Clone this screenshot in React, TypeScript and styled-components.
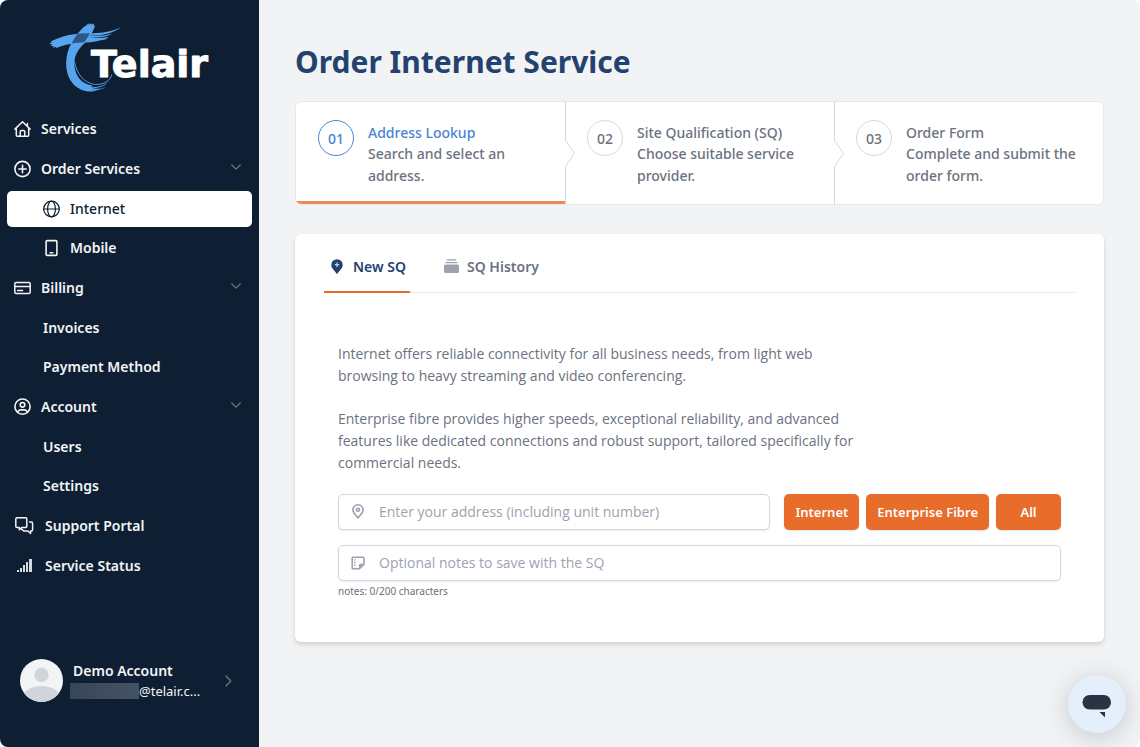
import React, { useState } from "react";
import styled, { createGlobalStyle, css } from "styled-components";

const navy = "#0f1f33";
const orange = "#e86c2a";
const line = "#e5e7eb";
const lineDark = "#d7d9e0";
const textFont = `"Open Sans", "Segoe UI", sans-serif`;

const GlobalStyle = createGlobalStyle`
  *, *::before, *::after { box-sizing: border-box; }
  body { margin: 0; background: #fff; }
  body, button { font-family: "Noto Sans", "Segoe UI", sans-serif; }
  h1, h2, p, ul, ol { margin: 0; padding: 0; }
  ul, ol { list-style: none; }
  a { color: inherit; text-decoration: none; }
`;

const Shell = styled.div`
  display: flex;
  min-height: 100vh;
  border-radius: 8px;
  overflow: hidden;
  background: #f2f3f5;
`;

const Sidebar = styled.aside`
  display: flex;
  flex-direction: column;
  flex: none;
  width: 259px;
  background: ${navy};
  color: #f3f4f6;
`;

const LogoLink = styled.a`
  display: block;
  height: 111px;
  padding: 20px 0 0 48px;
  svg { display: block; overflow: visible; }
`;

const NavList = styled.ul`
  display: flex;
  flex-direction: column;
  gap: 4px;
  padding: 0 7px;
`;

const SubList = styled.ul`
  display: flex;
  flex-direction: column;
  gap: 3px;
  margin-top: 4px;
`;

const rowStyle = css<{ $sub?: boolean; $active?: boolean }>`
  display: flex;
  align-items: center;
  gap: 10px;
  width: 100%;
  height: 36px;
  padding: 0 11px 0 ${(p) => (p.$sub ? 36 : 7)}px;
  border: 0;
  border-radius: 5px;
  background: ${(p) => (p.$active ? "#fff" : "transparent")};
  color: ${(p) => (p.$active ? navy : "#f3f4f6")};
  font-size: 14px;
  font-weight: ${(p) => (p.$active ? 500 : 600)};
  line-height: 20px;
  text-align: left;
  svg { flex: none; }
`;
const NavLink = styled.a<{ $sub?: boolean; $active?: boolean }>`${rowStyle}`;
const NavToggle = styled.button<{ $sub?: boolean; $active?: boolean }>`
  ${rowStyle}
  cursor: pointer;
  span { flex: 1; }
`;

const Profile = styled.a`
  display: flex;
  align-items: center;
  margin-top: auto;
  padding: 0 26px 45px 20px;
  svg { flex: none; }
`;
const ProfileText = styled.div`
  flex: 1;
  min-width: 0;
  padding-left: 7px;
  font-size: 14px;
  line-height: 21px;
`;
const ProfileName = styled.div`
  padding-left: 3px;
  font-weight: 600;
`;
const Email = styled.div`
  display: flex;
  align-items: center;
  font-size: 13px;
`;
const Masked = styled.span`
  width: 69px;
  height: 16px;
  background: linear-gradient(90deg, #384657, #455263);
`;

const Main = styled.main`
  flex: 1;
  min-width: 0;
  padding: 40px 36px;
`;
const Title = styled.h1`
  color: #23426f;
  font-size: 30px;
  font-weight: 700;
  line-height: 44px;
`;

const Steps = styled.ol`
  display: grid;
  grid-template-columns: repeat(3, 1fr);
  margin-top: 17px;
  border: 1px solid ${line};
  border-radius: 6px;
  background: #fff;
  overflow: hidden;
`;
const Step = styled.li<{ $current?: boolean }>`
  position: relative;
  display: flex;
  gap: 14px;
  min-height: 102px;
  padding: 18px 20px 16px 22px;
  color: ${(p) => (p.$current ? "#4a82d8" : "#6b7280")};
  box-shadow: ${(p) => (p.$current ? "inset 0 -3px #e98b5a" : "none")};
  & + & {
    padding-left: 21px;
    border-left: 1px solid ${lineDark};
  }
`;
const StepNumber = styled.span<{ $current?: boolean }>`
  display: flex;
  align-items: center;
  justify-content: center;
  flex: none;
  width: 36px;
  height: 36px;
  border: 1px solid ${(p) => (p.$current ? "#4a82d8" : lineDark)};
  border-radius: 50%;
  font-size: 14px;
  font-weight: 500;
`;
const StepText = styled.div`
  padding-top: 2px;
  font-size: 14px;
  font-weight: 500;
`;
const StepName = styled.h2`
  font-size: 14px;
  font-weight: 500;
  line-height: 21px;
`;
const StepInfo = styled.p`
  color: #6b7280;
  line-height: 22px;
`;
const StepArrow = styled.svg`
  position: absolute;
  left: -1px;
  top: 38px;
`;

const Panel = styled.section`
  margin-top: 29px;
  padding: 0 29px 43px;
  border-radius: 6px;
  background: #fff;
  box-shadow: 0 3px 5px rgba(0, 0, 0, 0.1), 0 1px 3px rgba(0, 0, 0, 0.06);
`;
const Tabs = styled.div`
  display: flex;
  gap: 28px;
  border-bottom: 1px solid ${line};
`;
const Tab = styled.button<{ $active?: boolean }>`
  display: flex;
  align-items: center;
  gap: 7px;
  height: 59px;
  margin-bottom: -1px;
  padding: 8px 4px 0;
  border: 0;
  border-bottom: 2px solid ${(p) => (p.$active ? orange : "transparent")};
  background: none;
  color: ${(p) => (p.$active ? "#23426f" : "#6b7280")};
  font-size: 14px;
  font-weight: 600;
  cursor: pointer;
`;

const Body = styled.div`
  padding: 50px 14px 0;
`;
const Intro = styled.div`
  max-width: 530px;
  color: #6b7280;
  font-family: ${textFont};
  font-size: 14px;
  line-height: 22px;
  p + p { margin-top: 21px; }
`;
const Form = styled.form`
  display: flex;
  flex-direction: column;
  gap: 15px;
  margin-top: 20px;
`;
const SearchRow = styled.div`
  display: flex;
  gap: 14px;
`;
const Buttons = styled.div`
  display: flex;
  gap: 7px;
`;
const Field = styled.label`
  display: flex;
  align-items: center;
  flex: 1 1 36px;
  gap: 11px;
  min-width: 0;
  height: 36px;
  padding: 0 10px;
  border: 1px solid #d3d6de;
  border-radius: 5px;
  background: #fff;
  box-shadow: 0 1px 2px rgba(0, 0, 0, 0.08);
  svg { flex: none; }
`;
const Input = styled.input`
  flex: 1;
  min-width: 0;
  border: 0;
  outline: 0;
  padding: 0;
  background: none;
  color: #374151;
  font-family: ${textFont};
  font-size: 14px;
  line-height: 20px;
  &::placeholder { color: #9ca3af; opacity: 1; }
`;
const Action = styled.button`
  min-width: 65px;
  height: 36px;
  padding: 0 11px;
  border: 0;
  border-radius: 5px;
  background: ${orange};
  box-shadow: 0 1px 2px rgba(0, 0, 0, 0.1);
  color: #fff;
  font-size: 13px;
  font-weight: 600;
  white-space: nowrap;
  cursor: pointer;
`;
const Notes = styled.div`
  display: flex;
  flex-direction: column;
`;
const Hint = styled.p`
  margin-top: 2px;
  color: #6b7280;
  font-size: 10px;
  line-height: 16px;
`;

const ChatButton = styled.button`
  position: fixed;
  right: 14px;
  bottom: 14px;
  width: 58px;
  height: 58px;
  padding: 0;
  border: 0;
  border-radius: 50%;
  background: #e5effc;
  box-shadow: 0 4px 26px rgba(30, 50, 60, 0.22);
  cursor: pointer;
  svg { display: block; }
`;

const Icon = ({ size = 17, width = 1.4, children }: { size?: number; width?: number; children: React.ReactNode }) => (
  <svg width={size} height={18} viewBox={`0 0 ${size} 18`} fill="none" stroke="currentColor" strokeWidth={width} strokeLinecap="round" strokeLinejoin="round" aria-hidden="true">
    {children}
  </svg>
);

const HomeIcon = () => (
  <Icon width={1.5}>
    <path d="M.9 9.100 8.500 1.700l7.600 7.400M2.300 8.100v7.200c0 .6.4 1 1 1h10.400c.6 0 1-.4 1-1V8.100M13.400 3.500v2.600M6.200 16.100v-4.200c0-.8.6-1.400 1.400-1.400h1.800c.8 0 1.400.6 1.400 1.400v4.200" />
  </Icon>
);
const PlusIcon = () => (
  <Icon width={1.6}>
    <circle cx="8.500" cy="9" r="7.600" />
    <path d="M8.500 5.300v7.400M4.800 9h7.400" />
  </Icon>
);
const GlobeIcon = () => (
  <Icon width={1.2}>
    <circle cx="8.500" cy="9" r="7.800" />
    <ellipse cx="8.500" cy="9" rx="3.900" ry="7.800" />
    <path d="M.8 9h15.400" />
  </Icon>
);
const PhoneIcon = () => (
  <Icon width={1.6}>
    <rect x="3.100" y="1.600" width="10.800" height="14.800" rx="1.200" />
    <path d="M7.200 13.700h2.600" />
  </Icon>
);
const CardIcon = () => (
  <Icon width={1.5}>
    <rect x=".8" y="3.400" width="15.400" height="11.200" rx="1.400" />
    <path d="M.8 7.500h15.400M3.600 11.600h5" />
  </Icon>
);
const UserIcon = () => (
  <Icon width={1.6}>
    <circle cx="8.500" cy="8.600" r="7.600" />
    <circle cx="8.500" cy="6.800" r="2.300" />
    <path d="M3.600 14c.6-1.400 1.700-2.100 3-2.100h3.800c1.300 0 2.400.7 3 2.100" />
  </Icon>
);
const ChatIcon = () => (
  <Icon size={21} width={1.5}>
    <path d="M3 .8h8.600c.8 0 1.200.4 1.200 1.200v7.200c0 .8-.4 1.200-1.200 1.200H8l-2.700 2.400v-2.400H3c-.8 0-1.200-.4-1.200-1.200V2C1.800 1.200 2.200.8 3 .8Z" />
    <path d="M15.600 5h1.800c.8 0 1.200.4 1.200 1.200v6.600c0 .8-.4 1.200-1.200 1.200h-.8v2.500L13.900 14H9.800l-2.200-1.800" />
  </Icon>
);
const SignalIcon = () => (
  <svg width="21" height="18" viewBox="0 0 21 18" fill="#d5dae0" aria-hidden="true">
    <path d="M3 13h2v2H3zM6 11h2v4H6zM9 8h2v7H9zM12 5h2v10h-2zM15 2h3v13h-3z" />
  </svg>
);
const ChevronDown = () => (
  <svg width="10" height="12" viewBox="0 0 10 12" fill="none" stroke="#6a7485" strokeWidth="1.200" strokeLinecap="round" strokeLinejoin="round" aria-hidden="true">
    <path d="M.8 2l4.200 4.200L9.200 2" />
  </svg>
);

const Logo = () => (
  <svg width="164" height="76" viewBox="48 20 164 76" role="img" aria-label="Telair">
    <g fill="#57a5ee">
      <path d="M49.200 43.500l3-1.500-1.600-.4C58 37.500 66 35 76 33.900c6-.7 12-.5 17-.6 11-.3 20-2.300 28.200-6.300-7 5.500-16 8-26 8.500l-8 .3c8 .6 17 0 25-2-1.600 1-3.200 1.700-5 2.300-6 1.500-12 1.800-18 1.600 6 .6 13 .6 19.500-.6-1 .9-2 1.300-3.300 1.600l3 .1c-3 .8-6 1-9 1.600-3 .9-8 1.700-13 2-12 .4-21 1.800-31 5.800l1-1.400-3.600.9 1-1.500-3.200-.4 1.800-1.200z" />
      <path d="M83.800 27l1.400-1.300.4 1 1.600-3 .6 1.300 1.500-2.300.3 1.700 1.600-1 .2 1.200 2.900-1-.7 2 1.500.2c-2 6-5 11-9.100 16.200C78 49 74.600 55 74.300 63c0 12 7 21.500 18.500 22.600-1 .5-2 .5-3 .4 6 2 12.400.6 18-3.400-4.500 4.700-10.600 6.300-17 5 4.500 1.800 10 1.600 15-.7-5 3.200-10 3.600-15 2.500 2 .9 4.300 1 6.700.7-3.500 1.700-8 1.900-12 .9C73.500 88.500 66 77.500 66.100 63.500 66.300 49 73.500 36.500 83.800 27Z" />
    </g>
    <path d="M77.500 33.800c4-.5 8-.6 12.300-.6-1.300 2.900-3 5.700-5.500 9-4.200.2-8 .6-12.500 1.300 1.500-3.500 3.500-6.800 5.700-9.700Z" fill="#2d5788" />
    <g fill="none" stroke="#57a5ee">
      <path d="M74.400 61c2 13 10 22.500 21 23.500 8 .3 15-3.500 16.400-10" strokeWidth=".9" />
      <path d="M71.800 65c2 12 10 20.500 20 22" strokeWidth="1" />
    </g>
    <text x="91" y="77" fill="#fff" stroke="#fff" strokeWidth="1" strokeLinejoin="round" fontFamily="'DejaVu Sans', sans-serif" fontWeight="700" fontSize="38">
      Telair
    </text>
  </svg>
);

type Item = { label: string; icon?: React.ReactNode; active?: boolean; children?: Item[] };
const items: Item[] = [
  { label: "Services", icon: <HomeIcon /> },
  {
    label: "Order Services",
    icon: <PlusIcon />,
    children: [
      { label: "Internet", icon: <GlobeIcon />, active: true },
      { label: "Mobile", icon: <PhoneIcon /> },
    ],
  },
  { label: "Billing", icon: <CardIcon />, children: [{ label: "Invoices" }, { label: "Payment Method" }] },
  { label: "Account", icon: <UserIcon />, children: [{ label: "Users" }, { label: "Settings" }] },
  { label: "Support Portal", icon: <ChatIcon /> },
  { label: "Service Status", icon: <SignalIcon /> },
];

const NavItem = ({ item, sub }: { item: Item; sub?: boolean }) => {
  const [open, setOpen] = useState(true);
  if (!item.children) {
    return (
      <li>
        <NavLink href="#" $sub={sub} $active={item.active} aria-current={item.active ? "page" : undefined}>
          {item.icon}
          {item.label}
        </NavLink>
      </li>
    );
  }
  return (
    <li>
      <NavToggle type="button" aria-expanded={open} onClick={() => setOpen(!open)}>
        {item.icon}
        <span>{item.label}</span>
        <ChevronDown />
      </NavToggle>
      {open && (
        <SubList>
          {item.children.map((child) => (
            <NavItem key={child.label} item={child} sub />
          ))}
        </SubList>
      )}
    </li>
  );
};

const steps = [
  { no: "01", name: "Address Lookup", info: "Search and select an address.", current: true },
  { no: "02", name: "Site Qualification (SQ)", info: "Choose suitable service provider." },
  { no: "03", name: "Order Form", info: "Complete and submit the order form." },
];

export default function App() {
  const [tab, setTab] = useState("new");
  const [address, setAddress] = useState("");
  const [notes, setNotes] = useState("");

  return (
    <>
      <GlobalStyle />
      <Shell>
        <Sidebar>
          <LogoLink href="#">
            <Logo />
          </LogoLink>
          <nav>
            <NavList>
              {items.map((item) => (
                <NavItem key={item.label} item={item} />
              ))}
            </NavList>
          </nav>
          <Profile href="#">
            <svg width="43" height="43" viewBox="0 0 43 43" aria-hidden="true">
              <clipPath id="avatar">
                <circle cx="21.500" cy="21.500" r="21.500" />
              </clipPath>
              <g clipPath="url(#avatar)">
                <path fill="#f3f4f6" d="M0 0h43v43H0z" />
                <g fill="#d1d5db">
                  <circle cx="21.500" cy="16" r="7.200" />
                  <ellipse cx="21.500" cy="44" rx="22" ry="17" />
                </g>
              </g>
            </svg>
            <ProfileText>
              <ProfileName>Demo Account</ProfileName>
              <Email>
                <Masked />
                @telair.c...
              </Email>
            </ProfileText>
            <svg width="10" height="12" viewBox="0 0 10 12" fill="none" stroke="#6a7485" strokeWidth="1.300" strokeLinecap="round" strokeLinejoin="round" aria-hidden="true">
              <path d="M3 1l4.800 5L3 11" />
            </svg>
          </Profile>
        </Sidebar>

        <Main>
          <Title>Order Internet Service</Title>

          <Steps>
            {steps.map((s, i) => (
              <Step key={s.no} $current={s.current} aria-current={s.current ? "step" : undefined}>
                {i > 0 && (
                  <StepArrow width="11" height="27" viewBox="0 0 11 27" aria-hidden="true">
                    <path d="M0 .5h1l8.500 13L1 26.500H0z" fill="#fff" />
                    <path d="M.5 .5l9 13-9 13" fill="none" stroke={lineDark} />
                  </StepArrow>
                )}
                <StepNumber $current={s.current}>{s.no}</StepNumber>
                <StepText>
                  <StepName>{s.name}</StepName>
                  <StepInfo>{s.info}</StepInfo>
                </StepText>
              </Step>
            ))}
          </Steps>

          <Panel>
            <Tabs role="tablist">
              <Tab type="button" role="tab" aria-selected={tab === "new"} $active={tab === "new"} onClick={() => setTab("new")}>
                <svg width="18" height="18" viewBox="0 0 18 18" aria-hidden="true">
                  <path d="M9 1.200a5.700 5.700 0 0 0-5.700 5.700c0 2.400 1.600 4.100 3.200 6 .8 1 1.400 1.700 1.900 2.500.3.500.9.500 1.200 0 .5-.8 1.100-1.500 1.900-2.500 1.600-1.900 3.200-3.600 3.200-6A5.700 5.700 0 0 0 9 1.200Z" fill="#23426f" />
                  <path d="M9 4.500v4.400M6.800 6.700h4.400" stroke="#c5d3e6" strokeWidth="1.200" />
                </svg>
                New SQ
              </Tab>
              <Tab type="button" role="tab" aria-selected={tab === "history"} $active={tab === "history"} onClick={() => setTab("history")}>
                <svg width="18" height="18" viewBox="0 0 18 18" fill="#9ca3af" aria-hidden="true">
                  <rect x="2" y="6.600" width="15" height="8.400" rx="1.600" />
                  <path d="M3.500 4h12v1.200h-12zM4.700 1.200h9.600v1.200H4.700z" />
                </svg>
                SQ History
              </Tab>
            </Tabs>

            <Body>
              <Intro>
                <p>Internet offers reliable connectivity for all business needs, from light web browsing to heavy streaming and video conferencing.</p>
                <p>Enterprise fibre provides higher speeds, exceptional reliability, and advanced features like dedicated connections and robust support, tailored specifically for commercial needs.</p>
              </Intro>
              <Form onSubmit={(e) => e.preventDefault()}>
                <SearchRow>
                  <Field>
                    <svg width="19" height="18" viewBox="0 0 19 18" fill="none" stroke="#9ca3af" strokeWidth="1.600" aria-hidden="true">
                      <path d="M9 1.700a5.100 5.100 0 0 0-5.100 5.100c0 3.300 3 5.400 5.100 8.200 2.100-2.800 5.100-4.900 5.100-8.200A5.100 5.100 0 0 0 9 1.700Z" strokeLinejoin="round" />
                      <circle cx="9" cy="6.800" r="1.500" />
                    </svg>
                    <Input aria-label="Address" placeholder="Enter your address (including unit number)" value={address} onChange={(e) => setAddress(e.target.value)} />
                  </Field>
                  <Buttons>
                    <Action type="submit">Internet</Action>
                    <Action type="submit">Enterprise Fibre</Action>
                    <Action type="submit">All</Action>
                  </Buttons>
                </SearchRow>
                <Notes>
                  <Field>
                    <svg width="19" height="18" viewBox="0 0 19 18" fill="none" stroke="#9ca3af" strokeWidth="1.600" strokeLinejoin="round" aria-hidden="true">
                      <path d="M4 3.200h10.200c.5 0 .8.300.8.800v6.200L10.400 14.800H4c-.5 0-.8-.3-.8-.8V4c0-.5.300-.8.800-.8Z" />
                      <path d="M15 10.200h-3.800c-.5 0-.8.300-.8.800v3.800z" fill="#9ca3af" strokeWidth="1" />
                      <path d="M5.800 5.200v8" strokeWidth="1.500" strokeDasharray="1.400 1.200" />
                    </svg>
                    <Input aria-label="Notes" maxLength={200} placeholder="Optional notes to save with the SQ" value={notes} onChange={(e) => setNotes(e.target.value)} />
                  </Field>
                  <Hint>notes: {notes.length}/200 characters</Hint>
                </Notes>
              </Form>
            </Body>
          </Panel>
        </Main>
      </Shell>
      <ChatButton type="button" aria-label="Open chat">
        <svg width="58" height="58" viewBox="0 0 58 58" fill="#283443" aria-hidden="true">
          <rect x="14.500" y="20" width="28.500" height="14.500" rx="7.200" />
          <path d="M31.500 37H37v5.500z" />
        </svg>
      </ChatButton>
    </>
  );
}
